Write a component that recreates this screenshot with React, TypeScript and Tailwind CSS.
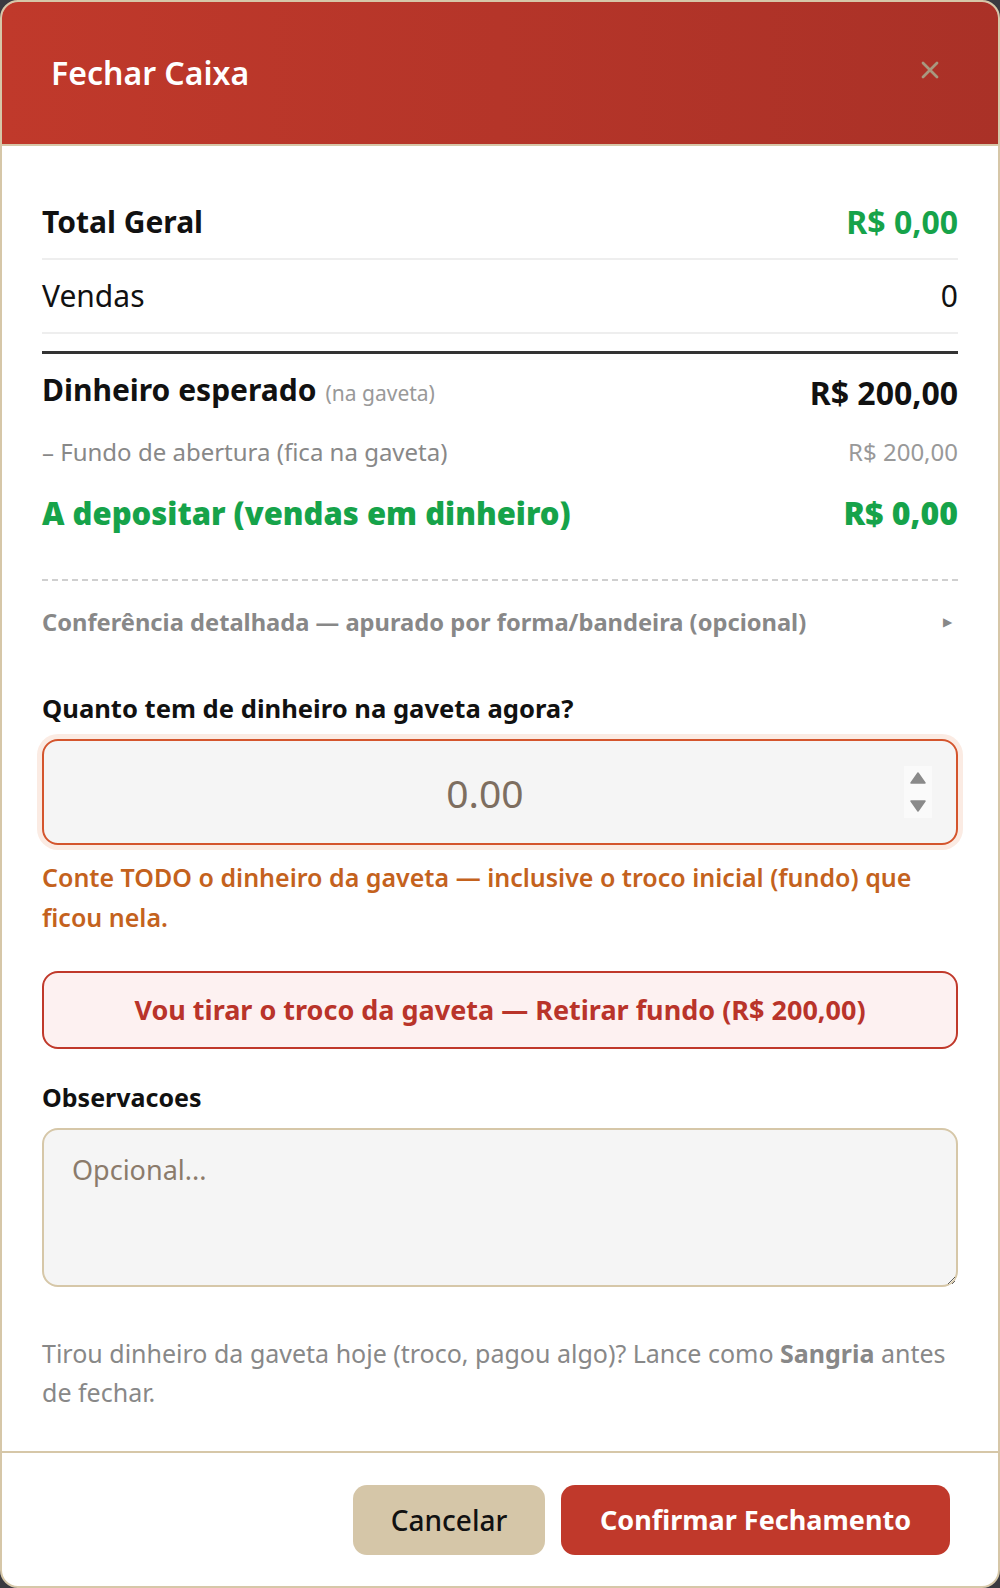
import { useState } from "react";

function CloseIcon() {
  return (
    <svg width="20" height="20" viewBox="0 0 20 20" fill="none">
      <path d="M3 3L17 17M17 3L3 17" stroke="#a8987f" strokeWidth="2.8" strokeLinecap="round" />
    </svg>
  );
}

function Spinner() {
  return (
    <div className="absolute right-[26px] top-1/2 -translate-y-1/2 flex h-[52px] w-[28px] flex-col items-center justify-between bg-[#fafafa] py-[6px]">
      <svg width="16" height="12" viewBox="0 0 16 12">
        <path d="M8 1L15 11H1Z" fill="#8a8a8a" stroke="#8a8a8a" strokeLinejoin="round" strokeWidth="1.5" />
      </svg>
      <svg width="16" height="12" viewBox="0 0 16 12">
        <path d="M8 11L15 1H1Z" fill="#8a8a8a" stroke="#8a8a8a" strokeLinejoin="round" strokeWidth="1.5" />
      </svg>
    </div>
  );
}

export default function App() {
  const [valor, setValor] = useState("");
  const [obs, setObs] = useState("");

  return (
    <div
      className="min-h-screen bg-[#3a3a40]"
      style={{ fontFamily: '"Noto Sans", "Open Sans", sans-serif' }}
    >
      <div className="flex h-[1588px] w-full flex-col overflow-hidden rounded-[18px] border-2 border-[#d6c7a8] bg-white">
        {/* Header */}
        <div className="flex h-[144px] shrink-0 items-center justify-between border-b-2 border-[#d6c7a8] bg-gradient-to-r from-[#c0392b] to-[#aa3127] pl-[49px] pr-[58px]">
          <h2 className="text-[32px] font-semibold leading-none text-white">Fechar Caixa</h2>
          <button className="-mt-[6px]">
            <CloseIcon />
          </button>
        </div>

        {/* Body */}
        <div className="flex-1 px-10 pt-10">
          <div className="flex items-center justify-between border-b-2 border-[#eeeeee] py-[18px]">
            <span className="text-[30px] font-bold leading-9 text-[#111]">Total Geral</span>
            <span className="text-[32px] font-bold leading-9 text-[#16a34a]">R$ 0,00</span>
          </div>
          <div className="flex items-center justify-between border-b-2 border-[#eeeeee] py-[18px]">
            <span className="text-[30px] leading-9 text-[#111]">Vendas</span>
            <span className="text-[30px] leading-9 text-[#111]">0</span>
          </div>

          <div className="mt-[17px] border-t-[3px] border-[#333] pt-[18px]">
            <div className="flex items-center justify-between">
              <span className="leading-9 text-[#111]">
                <span className="text-[30px] font-bold">Dinheiro esperado</span>
                <span className="ml-[9px] text-[21px] text-[#999]">(na gaveta)</span>
              </span>
              <span className="text-[32px] font-bold leading-9 text-[#111]">R$ 200,00</span>
            </div>
            <div className="mt-[23px] flex items-center justify-between">
              <span className="text-[24px] leading-8 text-[#888]">– Fundo de abertura (fica na gaveta)</span>
              <span className="text-[24px] leading-8 text-[#999]">R$ 200,00</span>
            </div>
            <div className="mt-[27px] flex items-center justify-between">
              <span className="text-[31px] font-black leading-9 text-[#16a34a]">
                A depositar (vendas em dinheiro)
              </span>
              <span className="text-[32px] font-black leading-9 text-[#16a34a]">R$ 0,00</span>
            </div>
          </div>

          <div className="mt-[48px] border-t-2 border-dashed border-[#cfcfcf] pt-[26px]">
            <div className="flex items-center justify-between">
              <span className="text-[23.7px] font-bold leading-[30px] text-[#888]">
                Conferência detalhada — apurado por forma/bandeira (opcional)
              </span>
              <span className="pr-[6px] text-[12px] text-[#888]">▶</span>
            </div>
          </div>

          <label className="mt-[57px] block text-[25.6px] font-bold leading-[30px] text-[#111]">
            Quanto tem de dinheiro na gaveta agora?
          </label>
          <div className="relative mt-[15px] rounded-[16px] shadow-[0_0_0_5px_#fbebe3]">
            <input
              type="text"
              value={valor}
              onChange={(e) => setValor(e.target.value)}
              placeholder="0.00"
              className="h-[106px] w-full rounded-[16px] border-2 border-[#d4552d] bg-[#f5f5f5] pr-[30px] text-center text-[39px] text-[#5a4a3a] outline-none placeholder:text-[#7d6e60]"
            />
            <Spinner />
          </div>
          <p className="mt-[12px] text-[25px] font-semibold leading-10 text-[#c4621d]">
            Conte TODO o dinheiro da gaveta — inclusive o troco inicial (fundo) que ficou nela.
          </p>

          <button className="mt-[34px] flex h-[78px] w-full items-center justify-center rounded-[16px] border-2 border-[#c0392b] bg-[#fdf1f1] text-[27px] font-bold text-[#b9342a]">
            Vou tirar o troco da gaveta — Retirar fundo (R$ 200,00)
          </button>

          <label className="mt-[33px] block text-[25px] font-bold leading-[30px] text-[#111]">
            Observacoes
          </label>
          <textarea
            value={obs}
            onChange={(e) => setObs(e.target.value)}
            placeholder="Opcional..."
            className="mt-4 block h-[159px] w-full resize-y rounded-[16px] border-2 border-[#d6c7a8] bg-[#f5f5f5] px-[28px] py-[20px] text-[27px] text-[#333] outline-none placeholder:text-[#8b7b6b]"
          />

          <p className="mt-[47px] text-[25px] leading-[39px] text-[#888]">
            Tirou dinheiro da gaveta hoje (troco, pagou algo)? Lance como{" "}
            <strong className="font-bold">Sangria</strong> antes de fechar.
          </p>
        </div>

        {/* Footer */}
        <div className="flex shrink-0 items-center justify-end gap-4 border-t-2 border-[#d6c7a8] px-[48px] pb-[31px] pt-[32px]">
          <button className="h-[70px] w-[192px] rounded-[14px] bg-[#d5c6a8] text-[28px] font-medium text-[#111]">
            Cancelar
          </button>
          <button className="h-[70px] w-[389px] rounded-[14px] bg-[#c0392b] text-[27px] font-bold text-white">
            Confirmar Fechamento
          </button>
        </div>
      </div>
    </div>
  );
}
